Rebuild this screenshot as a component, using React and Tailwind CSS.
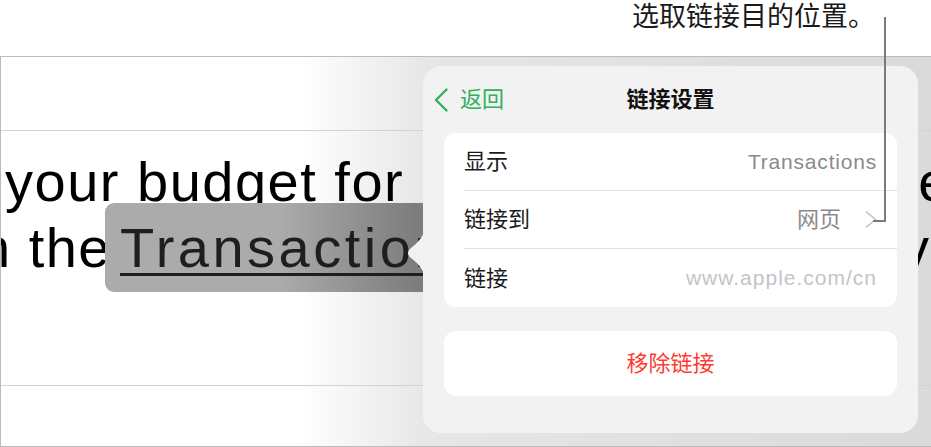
const ChevronLeft = ({ className }) => (
  <svg viewBox="0 0 14 24" className={className} fill="none" stroke="currentColor" strokeWidth="2.4" strokeLinecap="round" strokeLinejoin="round">
    <path d="M12.5 1.5 L2 12 L12.5 22.5" />
  </svg>
)

const ChevronRight = ({ className }) => (
  <svg viewBox="0 0 12 18" className={className} fill="none" stroke="currentColor" strokeWidth="1.6" strokeLinecap="round" strokeLinejoin="round">
    <path d="M1 1 L11 9 L1 17" />
  </svg>
)

const Row = ({ label, children, last }) => (
  <div className="flex h-[58px] items-center pl-[20px]">
    <div className={`flex h-full flex-1 items-center justify-between pr-[20px] ${last ? '' : 'border-b border-[#e3e3e6]'}`}>
      <span className="text-[22px] text-[#1a1a1a]">{label}</span>
      {children}
    </div>
  </div>
)

export default function App() {
  return (
    <div className="relative h-[447px] w-[931px] overflow-hidden bg-white font-['Liberation_Sans','Noto_Sans_CJK_SC',sans-serif]">
      {/* callout */}
      <div className="flex h-[56px] justify-end pr-[56px]">
        <span className="text-[27px] leading-[30px] text-[#1a1a1a] font-['Noto_Sans_CJK_SC',sans-serif]">选取链接目的位置。</span>
      </div>

      {/* document */}
      <div className="h-[391px] overflow-hidden border-t border-b border-l border-[#bcbcbc] bg-[linear-gradient(to_right,#ffffff_32%,#e6e6e6_46%,#dadada)]">
        <div className="h-[74px] border-b border-[#d2d2d2]" />
        <div className="h-[255px] border-b border-[#d2d2d2] pt-[18px] whitespace-nowrap text-[56px] leading-[66px] tracking-[1.5px] text-black">
          <div className="pl-[4px]">your budget for each expense in the</div>
          <div className="-ml-[36px]">
            in the
            <span className="ml-[-6px] rounded-[9px] bg-[linear-gradient(to_right,#ababab_45%,#7d7d7d_80%)] py-[13px] pl-[15px] pr-[12px] tracking-[3.5px] text-[#1e1e1e] underline decoration-[3px] underline-offset-[6px]">
              Transactions
            </span>{' '}
            sheet and every category
          </div>
        </div>
      </div>

      {/* popover */}
      <div className="absolute left-[423px] top-[66px] h-[367px] w-[495px] rounded-[18px] bg-[#f2f2f3]">
        <svg className="absolute left-[-16px] top-[164px] h-[46px] w-[18px]" viewBox="0 0 18 46">
          <path d="M18 0 C16 6 12 12 4 18 C0 21 0 25 4 28 C12 34 16 40 18 46 Z" fill="#f2f2f3" />
        </svg>
        <div className="grid h-[67px] grid-cols-[1fr_auto_1fr] items-center">
          <div className="flex items-center gap-[12px] pl-[11px] text-[#2fb05a]">
            <ChevronLeft className="h-[24px] w-[14px]" />
            <span className="text-[22px]">返回</span>
          </div>
          <span className="text-[22px] font-semibold text-[#111]">链接设置</span>
          <div />
        </div>
        <div className="mx-[21px] rounded-[12px] bg-white">
          <Row label="显示">
            <span className="text-[21px] tracking-[0.8px] text-[#8a8a8e]">Transactions</span>
          </Row>
          <Row label="链接到">
            <div className="flex items-center gap-[24px]">
              <span className="text-[22px] text-[#8a8a8e]">网页</span>
              <ChevronRight className="h-[17px] w-[12px] text-[#c4c4c7]" />
            </div>
          </Row>
          <Row label="链接" last>
            <span className="text-[21px] tracking-[1px] text-[#c4c4c7]">www.apple.com/cn</span>
          </Row>
        </div>
        <div className="mx-[21px] mt-[24px] flex h-[65px] items-center justify-center rounded-[12px] bg-white">
          <span className="text-[22px] text-[#ff3b30]">移除链接</span>
        </div>
      </div>

      {/* leader line */}
      <div className="absolute left-[884px] top-[17px] h-[205px] w-[2px] bg-[#7a7a7a]" />
      <div className="absolute left-[873px] top-[220px] h-[2px] w-[13px] bg-[#7a7a7a]" />
    </div>
  )
}
